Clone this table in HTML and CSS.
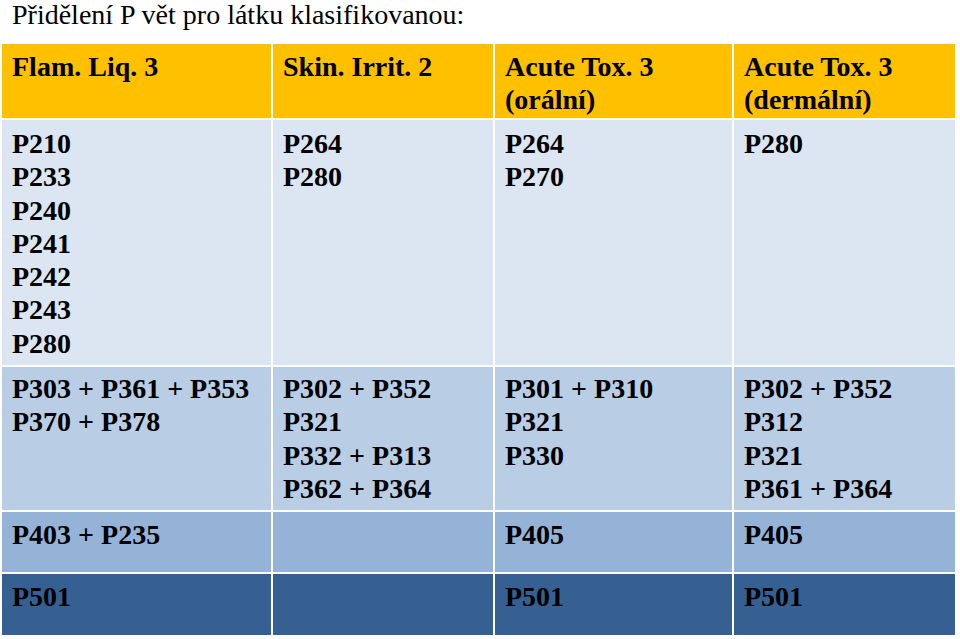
FILE: index.html
```html
<!DOCTYPE html>
<html lang="cs">
<head>
<meta charset="utf-8">
<title>Přidělení P vět</title>
<link rel="stylesheet" href="styles.css">
</head>
<body>
<h1 class="title">Přidělení P vět pro látku klasifikovanou:</h1>
<div class="grid">
  <div class="cell head">Flam. Liq. 3</div>
  <div class="cell head">Skin. Irrit. 2</div>
  <div class="cell head">Acute Tox. 3<br>(orální)</div>
  <div class="cell head">Acute Tox. 3<br>(dermální)</div>

  <div class="cell r2">P210<br>P233<br>P240<br>P241<br>P242<br>P243<br>P280</div>
  <div class="cell r2">P264<br>P280</div>
  <div class="cell r2">P264<br>P270</div>
  <div class="cell r2">P280</div>

  <div class="cell r3">P303 + P361 + P353<br>P370 + P378</div>
  <div class="cell r3">P302 + P352<br>P321<br>P332 + P313<br>P362 + P364</div>
  <div class="cell r3">P301 + P310<br>P321<br>P330</div>
  <div class="cell r3">P302 + P352<br>P312<br>P321<br>P361 + P364</div>

  <div class="cell r4">P403 + P235</div>
  <div class="cell r4"></div>
  <div class="cell r4">P405</div>
  <div class="cell r4">P405</div>

  <div class="cell r5">P501</div>
  <div class="cell r5"></div>
  <div class="cell r5">P501</div>
  <div class="cell r5">P501</div>
</div>
</body>
</html>
```
FILE: styles.css
```css
html, body {
  margin: 0;
  padding: 0;
  background: #ffffff;
}
body {
  font-family: "Liberation Serif", "Times New Roman", serif;
  color: #000000;
}
.title {
  margin: 0 0 14px 12px;
  font-size: 28px;
  line-height: 30px;
  font-weight: normal;
}
.grid {
  display: grid;
  margin-left: 2px;
  width: 953px;
  grid-template-columns: 269px 220px 237px 221px;
  grid-template-rows: 74px 245px 143px 60px 61px;
  gap: 2px;
}
.cell {
  padding: 6px 0 0 10px;
  font-size: 28px;
  line-height: 33.3px;
  font-weight: bold;
  white-space: nowrap;
}
.head { background: #ffc000; }
.r2 { background: #dce6f2; padding-top: 7px; }
.r3 { background: #b9cde5; padding-top: 5px; }
.r4 { background: #95b3d7; }
.r5 { background: #366092; }
```
